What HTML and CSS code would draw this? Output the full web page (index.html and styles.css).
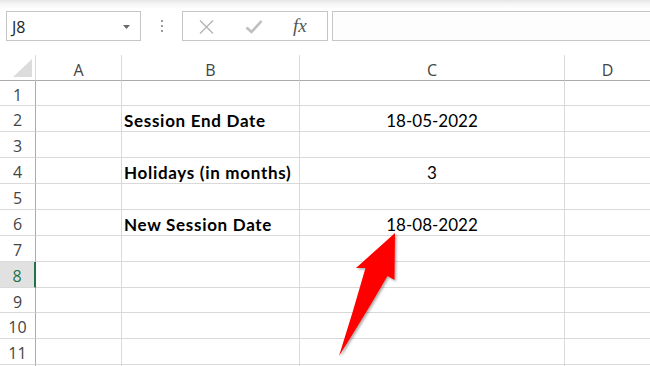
FILE: index.html
```html
<!DOCTYPE html>
<html>
<head>
<meta charset="utf-8">
<link rel="stylesheet" href="styles.css">
</head>
<body>
<div class="toolbar">
  <div class="namebox">
    <span class="nb-text">J8</span>
    <svg class="nb-drop" width="7" height="4" viewBox="0 0 7 4"><path d="M0 0H7L3.5 4Z" fill="#6a6a6a"/></svg>
  </div>
  <div class="dots"><i></i><i></i><i></i></div>
  <div class="fbtns">
    <svg class="ic-x" width="15" height="14" viewBox="0 0 15 14"><path d="M1 0.5L14 13.5M14 0.5L1 13.5" stroke="#b4b4b4" stroke-width="1.4" fill="none"/></svg>
    <svg class="ic-check" width="18" height="14" viewBox="0 0 18 14"><path d="M1.5 7.5L6.5 12L16.5 1" stroke="#bfbfbf" stroke-width="2.6" fill="none"/></svg>
    <span class="fx">fx</span>
  </div>
  <div class="finput"></div>
</div>

<div class="sheet">
  <div class="corner"><span class="tri"></span></div>
  <div class="ch">A</div>
  <div class="ch">B</div>
  <div class="ch">C</div>
  <div class="ch last">D</div>

  <div class="rh">1</div><div class="c"></div><div class="c"></div><div class="c"></div><div class="c last"></div>
  <div class="rh">2</div><div class="c"></div><div class="c b">Session End Date</div><div class="c m">18-05-2022</div><div class="c last"></div>
  <div class="rh">3</div><div class="c"></div><div class="c"></div><div class="c"></div><div class="c last"></div>
  <div class="rh">4</div><div class="c"></div><div class="c b">Holidays (in months)</div><div class="c m">3</div><div class="c last"></div>
  <div class="rh">5</div><div class="c"></div><div class="c"></div><div class="c"></div><div class="c last"></div>
  <div class="rh">6</div><div class="c"></div><div class="c b">New Session Date</div><div class="c m">18-08-2022</div><div class="c last"></div>
  <div class="rh">7</div><div class="c"></div><div class="c"></div><div class="c"></div><div class="c last"></div>
  <div class="rh sel">8</div><div class="c"></div><div class="c"></div><div class="c"></div><div class="c last"></div>
  <div class="rh">9</div><div class="c"></div><div class="c"></div><div class="c"></div><div class="c last"></div>
  <div class="rh">10</div><div class="c"></div><div class="c"></div><div class="c"></div><div class="c last"></div>
  <div class="rh">11</div><div class="c"></div><div class="c"></div><div class="c"></div><div class="c last"></div>
  <div class="rh"></div><div class="c"></div><div class="c"></div><div class="c"></div><div class="c last"></div>
</div>

<svg class="arrow" width="650" height="366" viewBox="0 0 650 366">
  <defs>
    <filter id="sh" x="-20%" y="-20%" width="140%" height="140%">
      <feDropShadow dx="1.5" dy="1.5" stdDeviation="1.2" flood-color="#000" flood-opacity="0.35"/>
    </filter>
  </defs>
  <path d="M395 233 L394.5 280 L387.5 276 Q368 310 339 356 Q353 312 365.5 268 L356 268 Z" fill="#ff0000" filter="url(#sh)"/>
</svg>
</body>
</html>
```

FILE: styles.css
```css
* { box-sizing: border-box; }
html, body {
  margin: 0;
  padding: 0;
  width: 650px;
  height: 366px;
  overflow: hidden;
  background: #fff;
}
body {
  position: relative;
  font-family: "Open Sans", "Noto Sans", sans-serif;
}

.toolbar {
  height: 55px;
  display: flex;
  align-items: flex-start;
  padding: 11px 0 0 6px;
  background: linear-gradient(to bottom, #e6e6e6 0px, #f6f6f6 4px, #ffffff 9px);
}
.namebox {
  width: 135px;
  height: 30px;
  border: 1px solid #c6c6c6;
  background: #fff;
  display: flex;
  align-items: center;
  justify-content: space-between;
  padding: 1px 10px 0 5px;
}
.nb-text {
  font-size: 16px;
  color: #222;
  line-height: 1;
}
.nb-drop { display: block; margin-top: 1px; }

.dots {
  width: 41px;
  height: 30px;
  display: flex;
  flex-direction: column;
  align-items: center;
  justify-content: center;
  gap: 3px;
}
.dots i {
  display: block;
  width: 2px;
  height: 2px;
  background: #9a9a9a;
}

.fbtns {
  width: 146px;
  height: 30px;
  border: 1px solid #c6c6c6;
  background: #fff;
  display: flex;
  align-items: center;
  padding-left: 16px;
}
.ic-x { display: block; margin-top: 1px; }
.ic-check { display: block; margin-left: 31px; margin-top: 1px; }
.fx {
  margin-left: 30px;
  font-family: "Liberation Serif", "DejaVu Serif", serif;
  font-style: italic;
  font-size: 19px;
  color: #555;
  line-height: 1;
  margin-top: -1px;
}
.finput {
  flex: 1;
  height: 30px;
  margin-left: 4px;
  margin-right: -2px;
  border: 1px solid #c6c6c6;
  background: #fdfdfd;
}

.sheet {
  display: grid;
  grid-template-columns: 36px 86px 178px 265px 1fr;
  grid-template-rows: 26px 25px 26px 26px 26px 26px 26px 26px 26px 25px 26px 26px 26px;
}
.sheet > div {
  border-right: 1px solid #d9d9d9;
  border-bottom: 1px solid #d9d9d9;
}
.sheet > div.last { border-right: none; }

.corner {
  position: relative;
  border-bottom: 1px solid #ababab !important;
  border-right: 1px solid #d9d9d9;
}
.tri {
  position: absolute;
  left: 13px;
  top: 4px;
  width: 0;
  height: 0;
  border-style: solid;
  border-width: 0 0 18px 19px;
  border-color: transparent transparent #dcdcdc transparent;
}
.ch {
  border-bottom: 1px solid #ababab !important;
  display: flex;
  align-items: center;
  justify-content: center;
  font-size: 16px;
  color: #444;
  padding-top: 4px;
}
.rh {
  border-right: 1px solid #ababab !important;
  display: flex;
  align-items: center;
  justify-content: center;
  font-size: 16px;
  color: #444;
  padding-top: 3px;
}
.rh.sel {
  background: #e1e1e1;
  color: #217346;
  border-right: 2px solid #217346 !important;
}
.c {
  display: flex;
  align-items: center;
  font-family: "Lato", "Liberation Sans", sans-serif;
  font-size: 17px;
  color: #000;
  padding-top: 3px;
  white-space: nowrap;
}
.c.b {
  font-weight: bold;
  letter-spacing: 0.7px;
  padding-left: 2px;
}
.c.m {
  justify-content: center;
}

.arrow {
  position: absolute;
  left: 0;
  top: 0;
  pointer-events: none;
}
```
